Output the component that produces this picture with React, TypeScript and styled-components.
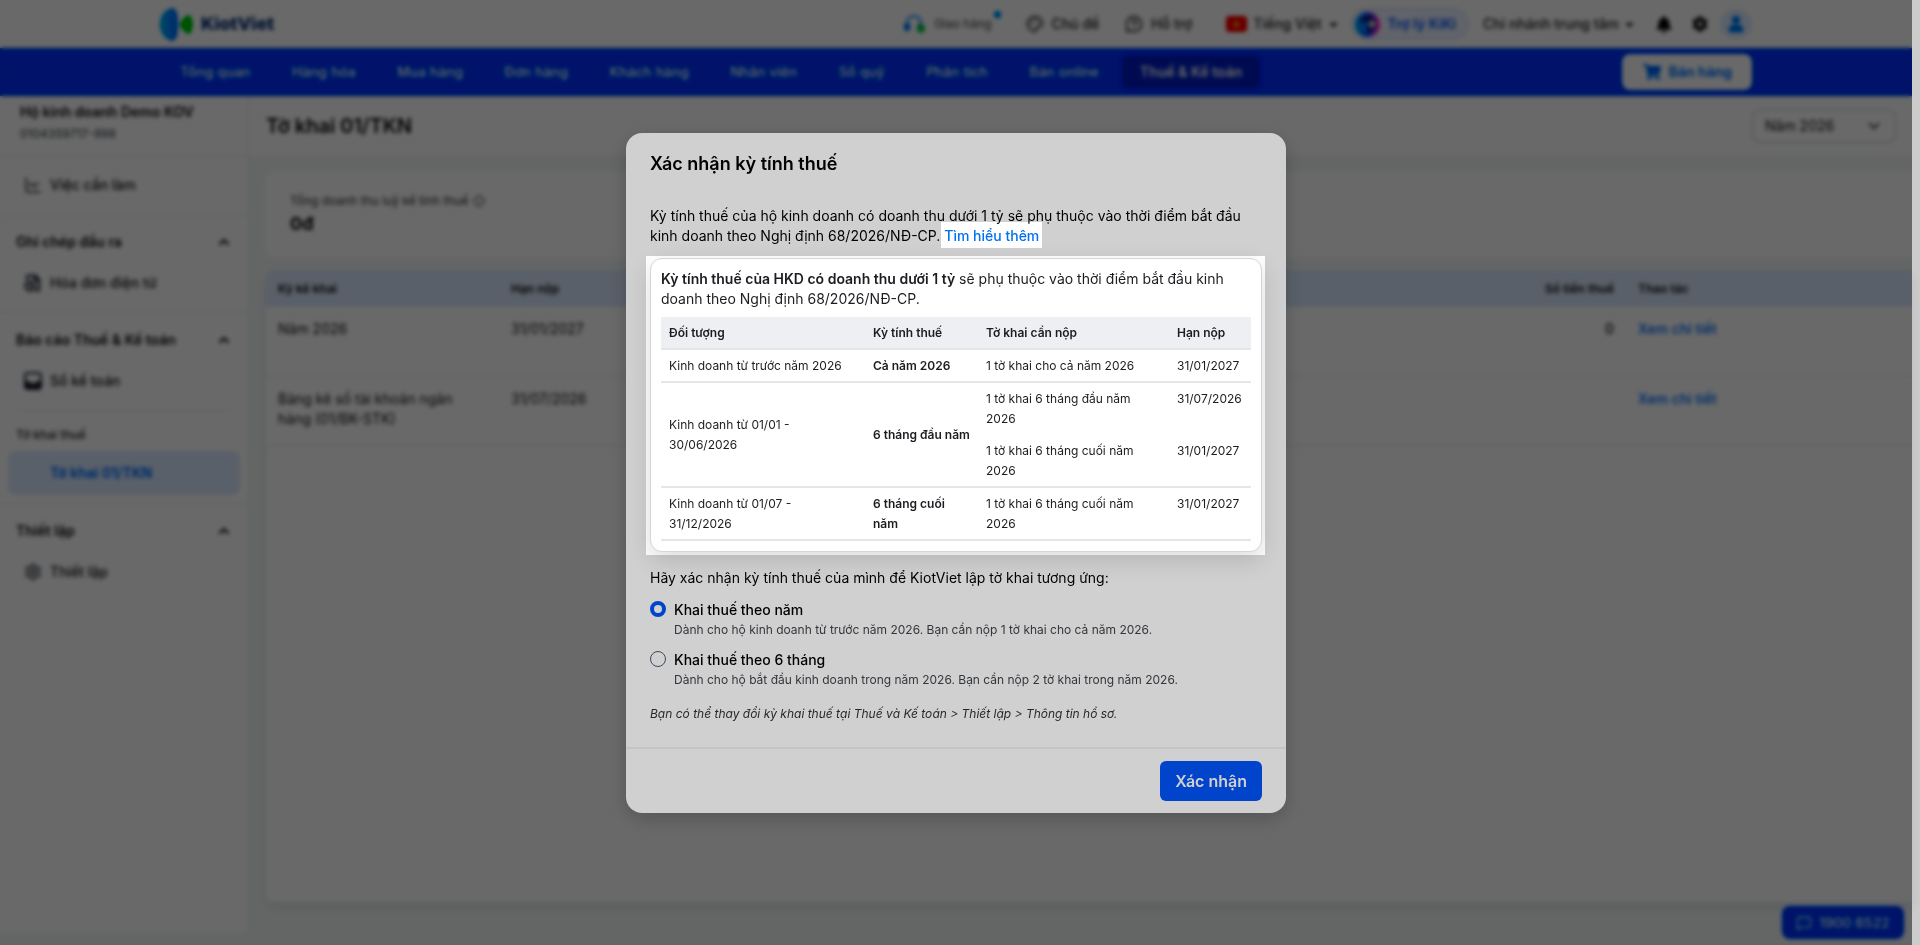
import React from 'react';
import styled, { createGlobalStyle } from 'styled-components';
import { Palette, MessageCircleQuestion, MessageSquareMore, ChartLine, ChevronDown, ChevronUp, Settings, Info, FileClock } from 'lucide-react';
import { FaBell, FaCog, FaUser, FaCaretDown, FaShoppingCart } from 'react-icons/fa';

const GlobalStyle = createGlobalStyle`
  *, *::before, *::after { box-sizing: border-box; }
  body { margin: 0; font-family: Inter, "Liberation Sans", sans-serif; font-size: 14px; line-height: 20px; color: #000; }
  button, select, input { font: inherit; color: inherit; margin: 0; }
  a { text-decoration: none; }
  p, h1, h2, ul { margin: 0; padding: 0; }
  ul { list-style: none; }
`;

const Screen = styled.div`
  display: flex;
  min-height: 100vh;
`;

const Page = styled.div`
  flex: 1;
  min-width: 0;
  display: flex;
  flex-direction: column;
  position: relative;
  background: #f4f7f6;
`;

const ScrollTrack = styled.div`
  width: 8px;
  background: #cccccc;
`;

const TopBar = styled.header`
  height: 48px;
  padding: 0 160px;
  display: flex;
  align-items: center;
  justify-content: space-between;
  background: #fff;
`;

const Brand = styled.a`
  display: flex;
  align-items: center;
  gap: 8px;
  color: #06204a;
  font-size: 18px;
  font-weight: 800;
`;

const Tools = styled.div`
  display: flex;
  align-items: center;
`;

const Tool = styled.button<{ $end?: number; $light?: boolean; $icon?: number }>`
  border: 0;
  background: none;
  padding: 0;
  display: flex;
  align-items: center;
  gap: ${p => p.$icon ?? 8}px;
  margin-right: ${p => p.$end ?? 24}px;
  position: relative;
  white-space: nowrap;
  font-size: ${p => (p.$light ? 12 : 14)}px;
  font-weight: ${p => (p.$light ? 400 : 500)};
  color: ${p => (p.$light ? '#333' : '#101114')};
`;

const NewDot = styled.i`
  position: absolute;
  top: -3px;
  right: -9px;
  width: 7px;
  height: 7px;
  border-radius: 50%;
  background: #0070f4;
`;

const Assistant = styled.button`
  display: flex;
  align-items: center;
  gap: 7px;
  height: 32px;
  padding: 0 12px 0 3px;
  margin-right: 14px;
  border: 1px solid #c4d3f2;
  border-radius: 16px;
  background: #eef2fa;
  color: #1846bc;
  font-weight: 600;
  white-space: nowrap;
`;

const IconButton = styled.button<{ $user?: boolean }>`
  width: ${p => (p.$user ? 32 : 16)}px;
  height: ${p => (p.$user ? 30 : 20)}px;
  padding: 0;
  border: 0;
  border-radius: 50%;
  display: flex;
  align-items: center;
  justify-content: center;
  margin-left: ${p => (p.$user ? 12 : 20)}px;
  background: ${p => (p.$user ? '#dfe9f7' : 'none')};
  color: ${p => (p.$user ? '#0a62d0' : '#000')};
`;

const NavBar = styled.nav`
  height: 48px;
  padding: 0 160px;
  display: flex;
  align-items: center;
  justify-content: space-between;
  background: #0030f0;
`;

const NavList = styled.ul`
  display: flex;
  gap: 1px;
`;

const NavLink = styled.a<{ $active?: boolean }>`
  display: block;
  padding: 8px 20px;
  border-radius: 8px;
  color: #fff;
  font-weight: ${p => (p.$active ? 600 : 500)};
  white-space: nowrap;
  background: ${p => (p.$active ? '#0a1c7c' : 'transparent')};
`;

const SellButton = styled.button`
  display: flex;
  align-items: center;
  gap: 8px;
  height: 36px;
  padding: 0 20px 0 21px;
  border: 0;
  border-radius: 8px;
  background: #fff;
  color: #0a54b8;
  font-weight: 600;
  white-space: nowrap;
`;

const Columns = styled.div`
  flex: 1;
  display: flex;
`;

const Sidebar = styled.aside`
  width: 249px;
  flex: none;
  margin-bottom: 13px;
  background: #fff;
  border-right: 1px solid #e2e5e8;
`;

const Company = styled.div`
  padding: 6px 20px 12px;
  border-bottom: 1px solid #e2e5e8;
`;

const CompanyName = styled.p`
  font-weight: 600;
  white-space: nowrap;
`;

const CompanyCode = styled.p`
  margin-top: 2px;
  font-size: 12px;
  color: #2c2f34;
`;

const Group = styled.section`
  padding: 7px 8px 8px;
  border-bottom: 1px solid #e2e5e8;
  &:last-child { border-bottom: 0; }
`;

const GroupToggle = styled.button`
  width: 100%;
  height: 40px;
  padding: 0 8px;
  border: 0;
  background: none;
  display: flex;
  align-items: center;
  justify-content: space-between;
  font-weight: 600;
`;

const SideLink = styled.a<{ $active?: boolean }>`
  display: flex;
  align-items: center;
  gap: 8px;
  height: ${p => (p.$active ? 44 : 42)}px;
  padding: 0 16px;
  border-radius: 8px;
  color: ${p => (p.$active ? '#0a54b8' : '#060708')};
  background: ${p => (p.$active ? '#e0e8f4' : 'transparent')};
  font-weight: ${p => (p.$active ? 600 : 500)};
`;

const IconSlot = styled.span`
  width: 18px;
  height: 18px;
  display: flex;
  color: #1c2026;
`;

const GroupLabel = styled.p`
  margin: 8px 8px 0;
  padding: 14px 0 6px;
  border-top: 1px solid #e2e5e8;
  font-size: 12px;
  font-weight: 500;
  color: #101114;
`;

const Main = styled.main`
  flex: 1;
  min-width: 0;
  display: flex;
  flex-direction: column;
`;

const TitleBar = styled.div`
  height: 59px;
  padding: 0 16px 0 17px;
  display: flex;
  align-items: center;
  justify-content: space-between;
  background: #fff;
`;

const Title = styled.h1`
  font-size: 20px;
  font-weight: 600;
  line-height: 28px;
`;

const YearBox = styled.div`
  position: relative;
  width: 144px;
`;

const YearSelect = styled.select`
  width: 100%;
  height: 34px;
  padding: 0 12px;
  appearance: none;
  border: 1px solid #bcc0c6;
  border-radius: 8px;
  background: #fff;
  color: #060708;
`;

const YearArrow = styled(ChevronDown)`
  position: absolute;
  right: 13px;
  top: 8px;
  pointer-events: none;
`;

const SummaryCard = styled.section`
  height: 85px;
  margin: 17px 0 13px 17px;
  padding: 19px 24px;
  border-radius: 8px 0 0 8px;
  background: #fff;
`;

const SummaryLabel = styled.p`
  display: flex;
  align-items: center;
  gap: 4px;
  font-size: 12px;
  color: #1e2024;
`;

const SummaryValue = styled.p`
  font-size: 18px;
  line-height: 26px;
  font-weight: 700;
`;

const TableCard = styled.section`
  flex: 1;
  margin: 0 0 43px 17px;
  border-radius: 8px 0 0 8px;
  background: #fff;
  box-shadow: 0 6px 12px rgba(0, 0, 0, 0.08);
  overflow: hidden;
`;

const Declarations = styled.table`
  width: 100%;
  table-layout: fixed;
  border-collapse: collapse;
  text-align: left;
  color: #060708;
  th { height: 37px; padding: 0 12px; background: #e0e8f4; font-size: 12px; font-weight: 600; color: #000; }
  td { height: 69px; padding: 12px 12px 0; vertical-align: top; border-bottom: 1px solid #e2e5e8; }
  a { color: #1456b4; font-weight: 500; }
`;

const Num = styled.td`
  text-align: right;
  font-weight: 500;
`;

const NumHead = styled.th`
  text-align: right;
`;

const Hotline = styled.button`
  position: absolute;
  right: 8px;
  bottom: 6px;
  height: 33px;
  padding: 0 14px;
  display: flex;
  align-items: center;
  gap: 7px;
  border: 0;
  border-radius: 8px;
  background: #0030f0;
  color: #fff;
  font-weight: 500;
`;

const Backdrop = styled.div`
  position: absolute;
  inset: 0;
  padding-top: 133px;
  display: flex;
  align-items: flex-start;
  justify-content: center;
  background: rgba(0, 0, 0, 0.588);
  backdrop-filter: blur(2px) saturate(180%);
`;

const Dialog = styled.div`
  width: 660px;
  border-radius: 16px;
  background: #d0d0d0;
  box-shadow: 0 6px 20px rgba(0, 0, 0, 0.2);
`;

const DialogTitle = styled.h2`
  padding: 17px 24px 15px;
  font-size: 18px;
  line-height: 28px;
  font-weight: 600;
`;

const DialogBody = styled.div`
  padding: 13px 20px 23px;
  isolation: isolate;
`;

const Text = styled.p`
  padding: 0 4px;
`;

const MoreLink = styled.a`
  position: relative;
  color: #0070f4;
  font-weight: 500;
  white-space: nowrap;
  &::before {
    content: '';
    position: absolute;
    inset: -5px -3px -4px -3px;
    background: #fff;
    z-index: -1;
  }
`;

const Spotlight = styled.div`
  margin: 10px 1px 0 0;
  padding: 2px 3px 3px 4px;
  background: #fff;
`;

const InfoCard = styled.div`
  padding: 10px;
  border: 1px solid #d3d5de;
  border-radius: 12px;
  background: #fff;
  box-shadow: 0 8px 24px rgba(0, 0, 0, 0.14);
  color: #1c1d21;
`;

const Strong = styled.b`
  font-weight: 600;
`;

const Periods = styled.table`
  width: 100%;
  margin-top: 8px;
  table-layout: fixed;
  border-collapse: separate;
  border-spacing: 0;
  text-align: left;
  font-size: 12px;
  th, td { padding: 6px 8px 5px; border-bottom: 2px solid #e6e6e7; }
  th { background: #eeeff2; font-weight: 600; }
`;

const Cell = styled.td<{ $middle?: boolean; $open?: boolean; $bold?: boolean }>`
  && {
    vertical-align: ${p => (p.$middle ? 'middle' : 'top')};
    font-weight: ${p => (p.$bold ? 600 : 400)};
    border-bottom-width: ${p => (p.$open ? 0 : 2)}px;
    padding-bottom: ${p => (p.$open ? 6 : 5)}px;
  }
`;

const Question = styled.p`
  margin: 13px 4px 12px;
`;

const Option = styled.label`
  display: flex;
  gap: 8px;
  margin: 0 4px 10px;
`;

const Radio = styled.input`
  && { margin: 1px 0 0; }
  flex: none;
  width: 16px;
  height: 16px;
  appearance: none;
  border: 1px solid #3d4a5c;
  border-radius: 50%;
  &:checked { border: 4px solid #0044cc; background: #d0d0d0; }
`;

const OptionName = styled.span`
  display: block;
  font-weight: 500;
`;

const OptionHint = styled.span`
  display: block;
  font-size: 12px;
  color: #33363b;
`;

const Note = styled.p`
  margin: 14px 4px 0;
  font-size: 12px;
  font-style: italic;
  color: #26282c;
`;

const DialogFooter = styled.footer`
  display: flex;
  justify-content: flex-end;
  padding: 12px 24px;
  border-top: 2px solid #c5c5c5;
`;

const Confirm = styled.button`
  height: 40px;
  padding: 0 15px;
  border: 0;
  border-radius: 6px;
  background: #0044cc;
  color: #d0d0d0;
  font-size: 16px;
  font-weight: 600;
`;

const BrandMark = () => (
  <svg width="33" height="33" viewBox="0 0 33 33" aria-hidden="true">
    <defs>
      <linearGradient id="mark" x1="0" x2="1">
        <stop offset="0" stopColor="#1c9cd8" />
        <stop offset="1" stopColor="#1058d0" />
      </linearGradient>
    </defs>
    <path d="M12 0C15 0 18 3 18 16.500S15 33 12 33C5 31 0 25 0 16.500S5 2 12 0Z" fill="url(#mark)" />
    <path d="M19.500 16.500C22 12 25 8 29 7C31 8 32.500 12 32.500 16.500S31 25 29 26C25 25 22 21 19.500 16.500Z" fill="#18a428" />
  </svg>
);

const Headset = () => (
  <svg width="22" height="18" viewBox="0 0 22 18" aria-hidden="true">
    <path d="M3 11V8a7 7 0 0 1 14 0v3" fill="none" stroke="#3c84dc" strokeWidth="2" />
    <rect x="0" y="8" width="6" height="8" rx="3" fill="#1260d0" />
    <path d="M14 8h4v4h-4z" fill="#3c84dc" />
    <circle cx="17" cy="13.500" r="4" fill="#30a850" />
  </svg>
);

const Flag = () => (
  <svg width="21" height="16" viewBox="0 0 21 16" aria-hidden="true">
    <rect width="21" height="16" rx="3" fill="#d01414" />
    <path d="M10.500 4l1 3h3l-2.400 1.800.9 3-2.500-1.800L8 11.800l.9-3L6.500 7h3z" fill="#f0c814" />
  </svg>
);

const KikiFace = () => (
  <svg width="25" height="25" viewBox="0 0 25 25" aria-hidden="true">
    <defs>
      <linearGradient id="kiki" x1="0" x2="1">
        <stop offset="0" stopColor="#20a4e0" />
        <stop offset="0.5" stopColor="#2040b0" />
        <stop offset="1" stopColor="#e0309a" />
      </linearGradient>
    </defs>
    <circle cx="12.500" cy="12.500" r="12.500" fill="url(#kiki)" />
    <circle cx="13" cy="12" r="8.500" fill="#141c50" />
    <path d="M4 12a8 8 0 0 0 8 8V9z" fill="#2078d0" />
    <path d="M17 7l1.500 3.500 3.500 1.500-3.500 1.500L17 17l-1.500-3.500L12 12l3.500-1.500z" fill="#fff" />
  </svg>
);

const Ledger = () => (
  <svg width="18" height="18" viewBox="0 0 18 18" aria-hidden="true">
    <rect x="1" y="1" width="16" height="16" rx="3" fill="none" stroke="currentColor" strokeWidth="2" />
    <path d="M1 9h4l2 2h4l2-2h4v7H1z" fill="currentColor" />
  </svg>
);

const navItems = ['Tổng quan', 'Hàng hóa', 'Mua hàng', 'Đơn hàng', 'Khách hàng', 'Nhân viên', 'Sổ quỹ', 'Phân tích', 'Bán online', 'Thuế & Kế toán'];

const SideGroup = ({ title, children }: { title: string; children: React.ReactNode }) => (
  <Group>
    <GroupToggle>{title}<ChevronUp size={16} strokeWidth={3} /></GroupToggle>
    {children}
  </Group>
);

export default function App() {
  return (
    <Screen>
      <GlobalStyle />
      <Page>
        <TopBar>
          <Brand href="#"><BrandMark />KiotViet</Brand>
          <Tools>
            <Tool $light $end={34}><Headset />Giao hàng<NewDot /></Tool>
            <Tool $end={26}><Palette size={18} />Chủ đề</Tool>
            <Tool $end={34}><MessageCircleQuestion size={18} />Hỗ trợ</Tool>
            <Tool $end={11} $icon={6}><Flag />Tiếng Việt<FaCaretDown size={13} /></Tool>
            <Assistant><KikiFace />Trợ lý KiKi</Assistant>
            <Tool $end={0} $icon={4}>Chi nhánh trung tâm<FaCaretDown size={13} /></Tool>
            <IconButton aria-label="Thông báo"><FaBell size={17} /></IconButton>
            <IconButton aria-label="Cài đặt"><FaCog size={16} /></IconButton>
            <IconButton $user aria-label="Tài khoản"><FaUser size={16} /></IconButton>
          </Tools>
        </TopBar>
        <NavBar>
          <NavList>
            {navItems.map((name, i) => (
              <li key={name}><NavLink href="#" $active={i === navItems.length - 1}>{name}</NavLink></li>
            ))}
          </NavList>
          <SellButton><FaShoppingCart size={18} />Bán hàng</SellButton>
        </NavBar>
        <Columns>
          <Sidebar>
            <Company>
              <CompanyName>Hộ kinh doanh Demo KOV</CompanyName>
              <CompanyCode>0104359717-998</CompanyCode>
            </Company>
            <Group>
              <SideLink href="#"><IconSlot><ChartLine size={18} /></IconSlot>Việc cần làm</SideLink>
            </Group>
            <SideGroup title="Ghi chép đầu ra">
              <SideLink href="#"><IconSlot><FileClock size={18} strokeWidth={3} /></IconSlot>Hóa đơn điện tử</SideLink>
            </SideGroup>
            <SideGroup title="Báo cáo Thuế & Kế toán">
              <SideLink href="#"><IconSlot><Ledger /></IconSlot>Sổ kế toán</SideLink>
              <GroupLabel>Tờ khai thuế</GroupLabel>
              <SideLink href="#" $active><IconSlot />Tờ khai 01/TKN</SideLink>
            </SideGroup>
            <SideGroup title="Thiết lập">
              <SideLink href="#"><IconSlot><Settings size={18} /></IconSlot>Thiết lập</SideLink>
            </SideGroup>
          </Sidebar>
          <Main>
            <TitleBar>
              <Title>Tờ khai 01/TKN</Title>
              <YearBox>
                <YearSelect aria-label="Năm" defaultValue="2026"><option value="2026">Năm 2026</option></YearSelect>
                <YearArrow size={18} />
              </YearBox>
            </TitleBar>
            <SummaryCard>
              <SummaryLabel>Tổng doanh thu luỹ kế tính thuế<Info size={12} /></SummaryLabel>
              <SummaryValue>0đ</SummaryValue>
            </SummaryCard>
            <TableCard>
              <Declarations>
                <colgroup><col width="233" /><col /><col width="200" /><col width="286" /></colgroup>
                <thead>
                  <tr><th>Kỳ kê khai</th><th>Hạn nộp</th><NumHead>Số tiền thuế</NumHead><th>Thao tác</th></tr>
                </thead>
                <tbody>
                  <tr><td>Năm 2026</td><td>31/01/2027</td><Num>0</Num><td><a href="#">Xem chi tiết</a></td></tr>
                  <tr><td>Bảng kê số tài khoản ngân hàng (01/BK-STK)</td><td>31/07/2026</td><td /><td><a href="#">Xem chi tiết</a></td></tr>
                </tbody>
              </Declarations>
            </TableCard>
          </Main>
        </Columns>
        <Hotline><MessageSquareMore size={16} />1900 6522</Hotline>
        <Backdrop>
          <Dialog role="dialog" aria-modal="true" aria-labelledby="dialog-title">
            <DialogTitle id="dialog-title">Xác nhận kỳ tính thuế</DialogTitle>
            <DialogBody>
              <Text>
                Kỳ tính thuế của hộ kinh doanh có doanh thu dưới 1 tỷ sẽ phụ thuộc vào thời điểm bắt đầu kinh doanh theo Nghị định 68/2026/NĐ-CP. <MoreLink href="#">Tìm hiểu thêm</MoreLink>
              </Text>
              <Spotlight>
                <InfoCard>
                  <p><Strong>Kỳ tính thuế của HKD có doanh thu dưới 1 tỷ</Strong> sẽ phụ thuộc vào thời điểm bắt đầu kinh doanh theo Nghị định 68/2026/NĐ-CP.</p>
                  <Periods>
                    <colgroup><col width="204" /><col width="113" /><col width="191" /><col /></colgroup>
                    <thead>
                      <tr><th>Đối tượng</th><th>Kỳ tính thuế</th><th>Tờ khai cần nộp</th><th>Hạn nộp</th></tr>
                    </thead>
                    <tbody>
                      <tr><Cell>Kinh doanh từ trước năm 2026</Cell><Cell $bold>Cả năm 2026</Cell><Cell>1 tờ khai cho cả năm 2026</Cell><Cell>31/01/2027</Cell></tr>
                      <tr>
                        <Cell rowSpan={2} $middle>Kinh doanh từ 01/01 - 30/06/2026</Cell>
                        <Cell rowSpan={2} $middle $bold>6 tháng đầu năm</Cell>
                        <Cell $open>1 tờ khai 6 tháng đầu năm 2026</Cell><Cell $open>31/07/2026</Cell>
                      </tr>
                      <tr><Cell>1 tờ khai 6 tháng cuối năm 2026</Cell><Cell>31/01/2027</Cell></tr>
                      <tr><Cell>Kinh doanh từ 01/07 - 31/12/2026</Cell><Cell $bold>6 tháng cuối năm</Cell><Cell>1 tờ khai 6 tháng cuối năm 2026</Cell><Cell>31/01/2027</Cell></tr>
                    </tbody>
                  </Periods>
                </InfoCard>
              </Spotlight>
              <Question>Hãy xác nhận kỳ tính thuế của mình để KiotViet lập tờ khai tương ứng:</Question>
              <Option>
                <Radio type="radio" name="period" defaultChecked />
                <span>
                  <OptionName>Khai thuế theo năm</OptionName>
                  <OptionHint>Dành cho hộ kinh doanh từ trước năm 2026. Bạn cần nộp 1 tờ khai cho cả năm 2026.</OptionHint>
                </span>
              </Option>
              <Option>
                <Radio type="radio" name="period" />
                <span>
                  <OptionName>Khai thuế theo 6 tháng</OptionName>
                  <OptionHint>Dành cho hộ bắt đầu kinh doanh trong năm 2026. Bạn cần nộp 2 tờ khai trong năm 2026.</OptionHint>
                </span>
              </Option>
              <Note>Bạn có thể thay đổi kỳ khai thuế tại Thuế và Kế toán &gt; Thiết lập &gt; Thông tin hồ sơ.</Note>
            </DialogBody>
            <DialogFooter><Confirm>Xác nhận</Confirm></DialogFooter>
          </Dialog>
        </Backdrop>
      </Page>
      <ScrollTrack />
    </Screen>
  );
}
